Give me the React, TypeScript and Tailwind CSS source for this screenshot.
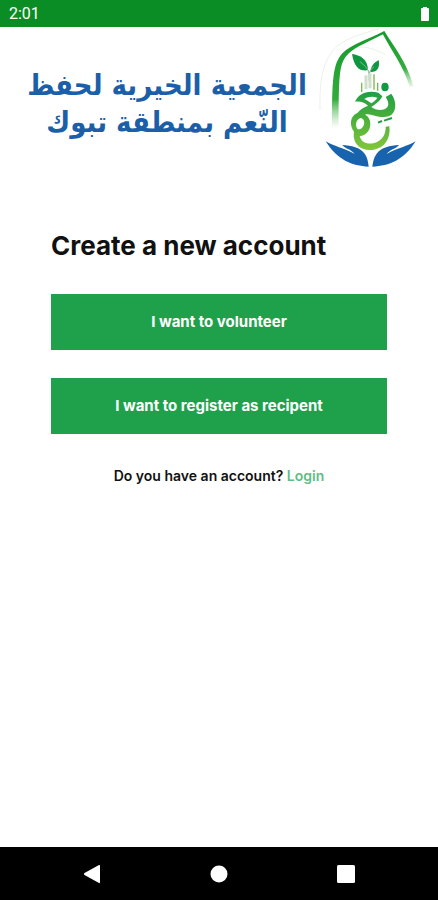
function Emblem() {
  return (
    <svg viewBox="0 21 384 444" className="h-[148px] w-32 shrink-0" role="img" aria-label="شعار الجمعية">
      <defs>
        <linearGradient id="arch" gradientUnits="userSpaceOnUse" x1="0" y1="35" x2="0" y2="325">
          <stop offset="0" stopColor="#159a2c" />
          <stop offset="0.7" stopColor="#32ac3c" />
          <stop offset="1" stopColor="#8bd087" stopOpacity="0" />
        </linearGradient>
        <linearGradient id="archRight" gradientUnits="userSpaceOnUse" x1="0" y1="35" x2="0" y2="205">
          <stop offset="0" stopColor="#159a2c" />
          <stop offset="0.65" stopColor="#32ac3c" />
          <stop offset="1" stopColor="#8bd087" stopOpacity="0.1" />
        </linearGradient>
        <linearGradient id="script" gradientUnits="userSpaceOnUse" x1="0" y1="190" x2="0" y2="390">
          <stop offset="0" stopColor="#12994a" />
          <stop offset="0.5" stopColor="#48ae3a" />
          <stop offset="1" stopColor="#83c63e" />
        </linearGradient>
      </defs>
      <path d="M30 270C28 180 38 120 80 80C115 50 160 42 208 25" fill="none" stroke="#dcebdc" strokeWidth="2" />
      <path d="M138 82C175 78 200 90 226 105" fill="none" stroke="#dcebdc" strokeWidth="2" />
      <path d="M223 33L219 43C165 70 126 86 107 110C88 136 86 170 86 325H66C66 180 68 130 98 99C125 72 175 58 223 33Z" fill="url(#arch)" />
      <path d="M217 40L223 33C250 78 290 125 310 198L299 202C283 142 243 90 217 40Z" fill="url(#archRight)" />
      <path d="M126 102C150 106 173 115 174 151C148 154 133 143 126 102Z" fill="#109640" />
      <path d="M206 120C211 143 201 157 181 156C183 139 190 129 206 120Z" fill="#109640" />
      <path d="M150 125Q168 138 176 153Q178 164 177 182M192 140Q182 146 178 160" fill="none" stroke="#79b98a" strokeWidth="3" />
      <path d="M168 166V207M180 160V205" stroke="#cfdfcc" strokeWidth="9" />
      <path d="M155 188V216M192 163V209M203 188V212" stroke="#78b851" strokeWidth="4" />
      <ellipse cx="225" cy="201" rx="11" ry="13" fill="#129944" />
      <path d="M135 245C146 222 169 210 205 218L217 229C210 244 195 254 184 261C196 270 212 272 225 267C238 260 238 248 227 231L244 221C262 246 260 280 236 289C207 298 181 277 165 284C184 291 187 325 169 340C162 347 155 349 149 348C154 368 171 374 193 369C217 361 228 342 227 320L238 319C243 355 224 384 192 389C154 395 126 372 132 335C119 319 118 288 142 279C151 267 163 262 174 257C162 246 150 243 135 245ZM163 237C171 241 179 246 184 250C191 246 199 239 202 233C188 228 173 230 163 237ZM151 294C136 300 135 320 144 328C162 330 172 297 151 294Z" fill="url(#script)" fillRule="evenodd" />
      <path d="M204 308L216 303M222 302L246 294" stroke="#219f43" strokeWidth="6" />
      <path d="M47 364C72 379 100 384 134 402C122 386 105 387 97 375C124 377 150 382 164 401C173 412 174 426 176 440C126 438 82 420 47 364Z" fill="#1763ad" />
      <path d="M317 364C292 379 264 384 230 402C242 386 259 387 267 375C240 377 214 382 200 401C191 412 189 426 187 440C238 438 282 420 317 364Z" fill="#1763ad" />
    </svg>
  );
}

export default function App() {
  return (
    <div className="flex min-h-screen flex-col bg-white font-['Inter',sans-serif] text-[#111]">
      <div className="flex h-[27px] items-center justify-between bg-[#098d24] pr-2 pl-[9px] text-white">
        <time className="font-['Roboto',sans-serif] text-base">2:01</time>
        <svg viewBox="0 0 10 16" className="h-4 w-[10px]" role="img" aria-label="Battery full">
          <path d="M3 1h4v1h1q1 0 1 1v11q0 1-1 1H2q-1 0-1-1V3q0-1 1-1h1z" fill="currentColor" />
        </svg>
      </div>

      <header className="flex items-start justify-end">
        <p
          dir="rtl"
          lang="ar"
          className="mt-10 flex-1 pl-6 text-center font-['DejaVu_Sans_Condensed','DejaVu_Sans',sans-serif] text-[29px] leading-[37px] font-bold whitespace-nowrap text-[#1b5fa8]"
        >
          الجمعية الخيرية لحفظ
          <br />
          النّعم بمنطقة تبوك
        </p>
        <Emblem />
      </header>

      <main className="flex flex-1 flex-col px-[51px] pt-[51px]">
        <h1 className="text-[26px] leading-10 font-bold whitespace-nowrap">Create a new account</h1>
        <div className="mt-7 flex flex-col gap-7">
          <button type="button" className="h-14 bg-[#1fa14b] text-[15px] font-bold text-white">
            I want to volunteer
          </button>
          <button type="button" className="h-14 bg-[#1fa14b] text-[15px] font-bold text-white">
            I want to register as recipent
          </button>
        </div>
        <p className="mt-8 text-center text-sm font-semibold">
          Do you have an account?{" "}
          <a href="#login" className="text-[#62bd83]">
            Login
          </a>
        </p>
      </main>

      <nav aria-label="System" className="flex h-[53px] items-center justify-between bg-black px-[83px] text-white">
        <button type="button" aria-label="Back">
          <svg viewBox="0 0 18 20" className="h-5 w-[18px]">
            <path d="M1.5 9L16 1Q17 .5 17 2v16q0 1.500-1 1L1.500 11Q0 10 1.500 9z" fill="currentColor" />
          </svg>
        </button>
        <button type="button" aria-label="Home">
          <svg viewBox="0 0 18 18" className="size-[18px]">
            <circle cx="9" cy="9" r="8.500" fill="currentColor" />
          </svg>
        </button>
        <button type="button" aria-label="Recent apps">
          <svg viewBox="0 0 18 18" className="size-[18px]">
            <rect width="18" height="18" rx="1.500" fill="currentColor" />
          </svg>
        </button>
      </nav>
    </div>
  );
}
